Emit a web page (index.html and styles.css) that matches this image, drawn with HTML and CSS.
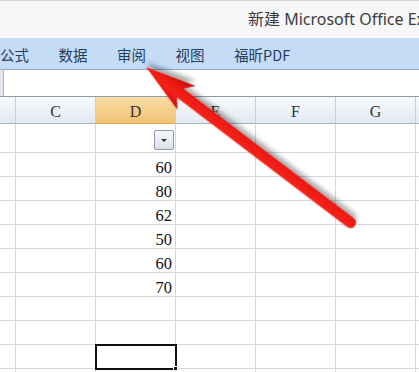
FILE: index.html
```html
<!DOCTYPE html>
<html>
<head>
<meta charset="utf-8">
<link rel="stylesheet" href="styles.css">
</head>
<body>
<div class="app">
  <div class="titlebar"><span class="title">新建 Microsoft Office Excel 工作表.xlsx - Microsoft Excel</span></div>
  <div class="tabs">
    <span class="tab">公式</span>
    <span class="tab">数据</span>
    <span class="tab">审阅</span>
    <span class="tab">视图</span>
    <span class="tab">福昕PDF</span>
  </div>
  <div class="fbar"><div class="fbar-left"></div><div class="fbar-input"></div></div>
  <div class="sheet">
    <div class="row head">
      <div class="c c0"></div><div class="c">C</div><div class="c sel">D</div><div class="c">E</div><div class="c">F</div><div class="c">G</div><div class="c last"></div>
    </div>
    <div class="row r1">
      <div class="c c0"></div><div class="c"></div><div class="c num"><span class="dd"><span class="tri"></span></span></div><div class="c"></div><div class="c"></div><div class="c"></div><div class="c last"></div>
    </div>
    <div class="row"><div class="c c0"></div><div class="c"></div><div class="c num">60</div><div class="c"></div><div class="c"></div><div class="c"></div><div class="c last"></div></div>
    <div class="row"><div class="c c0"></div><div class="c"></div><div class="c num">80</div><div class="c"></div><div class="c"></div><div class="c"></div><div class="c last"></div></div>
    <div class="row"><div class="c c0"></div><div class="c"></div><div class="c num">62</div><div class="c"></div><div class="c"></div><div class="c"></div><div class="c last"></div></div>
    <div class="row"><div class="c c0"></div><div class="c"></div><div class="c num">50</div><div class="c"></div><div class="c"></div><div class="c"></div><div class="c last"></div></div>
    <div class="row"><div class="c c0"></div><div class="c"></div><div class="c num">60</div><div class="c"></div><div class="c"></div><div class="c"></div><div class="c last"></div></div>
    <div class="row"><div class="c c0"></div><div class="c"></div><div class="c num">70</div><div class="c"></div><div class="c"></div><div class="c"></div><div class="c last"></div></div>
    <div class="row"><div class="c c0"></div><div class="c"></div><div class="c"></div><div class="c"></div><div class="c"></div><div class="c"></div><div class="c last"></div></div>
    <div class="row"><div class="c c0"></div><div class="c"></div><div class="c"></div><div class="c"></div><div class="c"></div><div class="c"></div><div class="c last"></div></div>
    <div class="row"><div class="c c0"></div><div class="c"></div><div class="c active"><span class="handle"></span></div><div class="c"></div><div class="c"></div><div class="c"></div><div class="c last"></div></div>
    <div class="row"><div class="c c0"></div><div class="c"></div><div class="c"></div><div class="c"></div><div class="c"></div><div class="c"></div><div class="c last"></div></div>
  </div>
  <svg class="arrow" width="419" height="372" viewBox="0 0 419 372">
    <defs>
      <linearGradient id="ag" x1="0" y1="-16" x2="0" y2="16" gradientUnits="userSpaceOnUse">
        <stop offset="0" stop-color="#c80a08"/>
        <stop offset="0.4" stop-color="#f42218"/>
        <stop offset="0.6" stop-color="#ee1a12"/>
        <stop offset="1" stop-color="#b40806"/>
      </linearGradient>
      <filter id="sh" x="-20%" y="-20%" width="140%" height="140%">
        <feDropShadow dx="3" dy="4" stdDeviation="2.5" flood-color="#000" flood-opacity="0.35"/>
      </filter>
    </defs>
    <g transform="translate(146 67) rotate(217.27)" filter="url(#sh)">
      <path d="M0 0 L-51 -15 L-43 -5.5 L-257 -5.5 A5.5 5.5 0 0 0 -257 5.5 L-43 5.5 L-51 15 Z" fill="url(#ag)"/>
    </g>
  </svg>
</div>
</body>
</html>
```

FILE: styles.css
```css
html, body { margin: 0; padding: 0; }
body { width: 419px; height: 372px; overflow: hidden; background: #fff; }
.app { position: relative; width: 419px; height: 372px; overflow: hidden; }

.titlebar {
  height: 37px;
  border-top: 1px solid #d4d4d4;
  background: #f7f7f7;
  white-space: nowrap;
  padding-left: 248px;
  font-family: "Noto Sans", "Noto Sans CJK SC", sans-serif;
  font-size: 16px;
  color: #3c3c3c;
  line-height: 37px;
}
.title { display: inline-block; }

.tabs {
  height: 31px;
  background: #c5dcf7;
  display: flex;
  align-items: center;
  gap: 29.5px;
  font-family: "Noto Sans CJK SC", sans-serif;
  font-size: 14.5px;
  color: #243d5e;
  white-space: nowrap;
}
.tab { line-height: 31px; padding-top: 1px; }

.fbar {
  height: 26px;
  border-top: 1px solid #93a8c2;
  border-bottom: 1px solid #8d9bab;
  display: flex;
  background: #fff;
}
.fbar-left { width: 3px; background: #dfe6ee; border-right: 1px solid #a9b6c6; }
.fbar-input { flex: 1; background: #fff; }

.sheet { display: flex; flex-direction: column; }
.row { display: flex; height: 24px; }
.c {
  width: 79px;
  flex: none;
  border-right: 1px solid #d2d7df;
  border-bottom: 1px solid #d2d7df;
  box-sizing: content-box;
  height: 23px;
  position: relative;
}
.c0 { width: 15px; }
.last { width: 40px; }

.head { height: 27px; }
.head .c {
  height: 26px;
  background: linear-gradient(#f8fafd, #e3e9f1);
  border-right-color: #c5ced9;
  border-bottom-color: #9eb4cc;
  font-family: "Liberation Serif", serif;
  font-size: 16px;
  color: #333;
  text-align: center;
  line-height: 30px;
}
.head .sel {
  background: linear-gradient(#f9dca6, #f2c274);
  border-bottom-color: #e2a849;
}
.r1 { height: 29px; }
.r1 .c { height: 28px; }

.num {
  font-family: "Liberation Serif", serif;
  font-size: 16.5px;
  color: #111;
  text-align: right;
  padding-right: 3px;
  width: 76px;
  line-height: 30px;
}
.dd {
  position: absolute;
  right: 1px;
  top: 6px;
  width: 18px;
  height: 18px;
  border: 1px solid #8e99ab;
  border-radius: 2px;
  background: linear-gradient(#f7f8fa, #dde1e7);
  display: flex;
  align-items: center;
  justify-content: center;
}
.tri {
  width: 0; height: 0;
  border-left: 3px solid transparent;
  border-right: 3px solid transparent;
  border-top: 3px solid #2a3448;
}
.active {
  outline: 2px solid #111;
  outline-offset: -1px;
  z-index: 2;
}
.handle {
  position: absolute;
  right: -3px;
  bottom: -3px;
  width: 5px;
  height: 5px;
  background: #111;
  border: 1px solid #fff;
  box-sizing: border-box;
}

.arrow { position: absolute; left: 0; top: 0; pointer-events: none; }
```
